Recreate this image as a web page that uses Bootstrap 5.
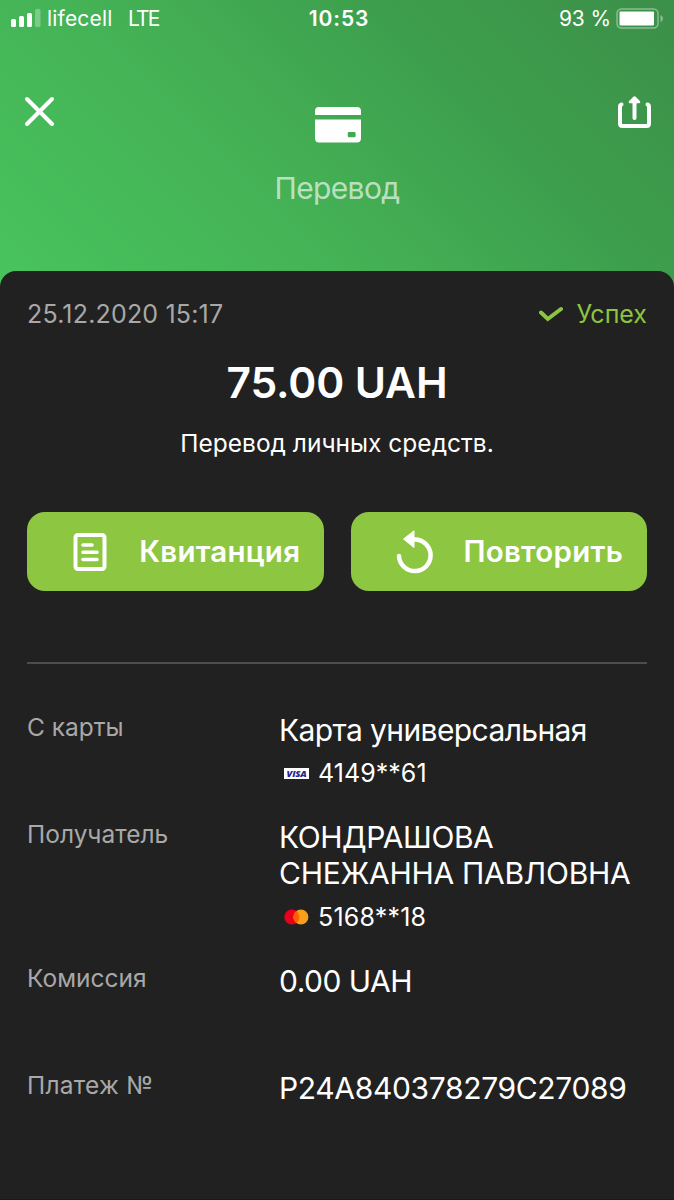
<!DOCTYPE html>
<html lang="ru">
<head>
<meta charset="utf-8">
<meta name="viewport" content="width=device-width, initial-scale=1">
<title>Перевод</title>
<link href="https://cdn.jsdelivr.net/npm/bootstrap@5.3.0/dist/css/bootstrap.min.css" rel="stylesheet">
<style>
body{font-family:Inter,"Liberation Sans",sans-serif;background:#212121;color:#fff;overflow-x:hidden}
.screen{height:1200px;overflow:hidden}
.hero{height:286px;background:linear-gradient(45deg,#48c45d 0%,#44b055 42%,#3d9f4d 68%,#3c8f49 100%)}
.statusbar{height:38px;padding:0 10px 0 11px;font-size:21px;line-height:38px;display:grid;grid-template-columns:1fr auto 1fr}
.carrier{margin-left:6px;letter-spacing:.2px}
.net{margin-left:15.5px;letter-spacing:-1.9px}
.clock{font-weight:600;letter-spacing:.9px;padding-left:3px}
.pct{letter-spacing:-.1px}
.battery{margin-left:5px}
.topbar{padding:58px 22px 0 24px}
.topicon{padding:11px 0 0 2px}
.hero-title{font-size:30px;line-height:40px;color:rgba(255,255,255,.65);margin-top:25px;letter-spacing:-.65px}
.sheet{height:929px;margin-top:-15px;border-radius:16px 16px 0 0;background:#212121;padding:22.500px 27px 0;border-bottom:1px solid #1b1919}
.meta{height:40px;font-size:25px;line-height:40px}
.date{letter-spacing:.18px}
.dim{color:#a8a8a8}
.ok{color:#8cc63f}
.tick{margin-right:14px}
.amount{font-size:42.5px;line-height:50px;font-weight:600;margin-top:24.500px;letter-spacing:-.1px}
.purpose{font-size:24.5px;line-height:36px;margin-top:17px}
.actions{margin-top:51px;gap:27px}
.act{height:79px;flex:1 1 0;border:0;border-radius:18px;background:#8dc742;color:#fff;font-size:29.5px;font-weight:600;padding:0 24px 0 46px;letter-spacing:.25px}
.act + .act{padding-left:44.500px}
.rule{height:2px;background:#4d4d4d;margin-top:71px}
.details{margin-top:45px}
.key{width:252px;flex:none;font-size:24.5px;line-height:36px}
.val{font-size:30px;line-height:36px;margin-top:3px}
.acct{font-size:25px;line-height:36px;margin-top:7px;padding-left:5px;gap:9px;letter-spacing:.05px}
.r1{height:107px}.r2{height:144px}.r3{height:107px}
.r2 .acct{margin-top:8px;letter-spacing:.2px}
.r2 .val{margin-top:3px}
.val-card{letter-spacing:-.6px}
.val-first{letter-spacing:-.42px}
.val-last{letter-spacing:-.27px}
.val-fee{letter-spacing:-.5px}
.val-id{letter-spacing:-.34px}
.key-id{letter-spacing:.25px}
svg{display:block;flex:none}
.visa{width:25px;height:11px;background:#fff;color:#24278a;font:italic 800 9.5px/11px "Open Sans",sans-serif;letter-spacing:-.25px;text-align:center}
</style>
</head>
<body>
<div class="screen">
  <header class="hero">
    <div class="statusbar">
      <div class="d-flex align-items-center">
        <svg width="30" height="20" viewBox="0 0 30 20" fill="#fff"><rect y="10" width="5" height="8" rx="1.5"/><rect x="8" y="7" width="5" height="11" rx="1.5"/><rect x="16" y="4" width="5" height="14" rx="1.5"/><rect x="24" width="5.500" height="18" rx="1.500" opacity=".3"/></svg>
        <span class="carrier">lifecell</span><span class="net">LTE</span>
      </div>
      <div class="clock">10:53</div>
      <div class="d-flex align-items-center justify-content-end">
        <span class="pct">93 %</span>
        <svg class="battery" width="48" height="22" viewBox="0 0 48 22"><rect x="1" y="1" width="41" height="19" rx="4.500" fill="none" stroke="#fff" stroke-width="1.500" opacity=".4"/><rect x="3.500" y="3.500" width="34.500" height="14" rx="1" fill="#fff"/><path d="M44.500 7q2.500 1 2.500 3.500t-2.500 3.500z" fill="#fff" opacity=".4"/></svg>
      </div>
    </div>
    <div class="topbar d-flex justify-content-between align-items-start">
      <svg width="32" height="32" viewBox="0 0 32 32"><path d="M3 3 28 28M28 3 3 28" stroke="#fff" stroke-width="4" stroke-linecap="round"/></svg>
      <div class="topicon"><svg width="46" height="36" viewBox="0 0 46 36" fill="#fff"><path d="M0 8V4Q0 0 4 0H42Q46 0 46 4V8ZM0 12.500H46V31Q46 35.500 42 35.500H4Q0 35.500 0 31ZM34 25q-1.300 0-1.300 1.300v2.600q0 1.300 1.300 1.300h5.300q1.300 0 1.300-1.300v-2.600q0-1.300-1.300-1.300z" fill-rule="evenodd"/></svg></div>
      <svg width="34" height="34" viewBox="0 0 34 34" fill="none" stroke="#fff" stroke-width="4" stroke-linecap="round" stroke-linejoin="round"><path d="M3.500 8.500Q2 9 2 11V27.500Q2 30 4.500 30H28.500Q31 30 31 27.500V11Q31 9 29.500 8.500"/><path d="M16.500 4V22"/><path d="M16.500 1.500 12 6H21Z" stroke-width="2.500" fill="#fff"/></svg>
    </div>
    <div class="hero-title text-center"><span>Перевод</span></div>
  </header>
  <main class="sheet position-relative">
    <div class="meta d-flex justify-content-between">
      <span class="dim date">25.12.2020 15:17</span>
      <span class="ok d-flex align-items-center"><svg class="tick" width="24" height="16" viewBox="0 0 24 16" fill="none" stroke="#8cc63f" stroke-width="4" stroke-linecap="round"><path d="M2 6.500 8.800 13 22 3"/></svg><span>Успех</span></span>
    </div>
    <div class="amount text-center"><span>75.00 UAH</span></div>
    <div class="purpose text-center"><span>Перевод личных средств.</span></div>
    <div class="actions d-flex">
      <button class="act btn d-flex align-items-center justify-content-between">
        <svg width="34" height="38" viewBox="0 0 34 38" fill="none" stroke="#fff" stroke-linecap="round"><rect x="2.500" y="2" width="29" height="34" rx="2.500" stroke-width="4"/><path d="M10 12H19M10 19.300H24M10 26.500H24" stroke-width="3.600"/></svg>
        <span>Квитанция</span>
      </button>
      <button class="act btn d-flex align-items-center justify-content-between">
        <svg width="38" height="44" viewBox="0 0 38 44" fill="none"><path d="M3 26A15.800 15.800 0 1 0 18.800 9.500" stroke="#fff" stroke-width="4.500" stroke-linecap="round"/><path d="M7.500 9 18 .8V17.500Z" fill="#fff" stroke="#fff" stroke-linejoin="round"/></svg>
        <span>Повторить</span>
      </button>
    </div>
    <div class="rule"></div>
    <div class="details">
      <div class="r1 d-flex"><div class="key dim">С карты</div><div class="val"><span class="val-card">Карта универсальная</span>
        <div class="acct d-flex align-items-center"><span class="visa">VISA</span><span>4149**61</span></div></div></div>
      <div class="r2 d-flex"><div class="key dim">Получатель</div><div class="val"><span class="val-first">КОНДРАШОВА</span><br><span class="val-last">СНЕЖАННА ПАВЛОВНА</span>
        <div class="acct d-flex align-items-center"><svg width="25" height="16" viewBox="0 0 25 16"><circle cx="7.800" cy="8" r="7.500" fill="#eb001b"/><circle cx="16.900" cy="8" r="7.500" fill="#f79e1b"/><path d="M12.350 2A7.500 7.500 0 0 1 12.350 14 7.500 7.500 0 0 1 12.350 2Z" fill="#ff5f00"/></svg><span>5168**18</span></div></div></div>
      <div class="r3 d-flex"><div class="key dim">Комиссия</div><div class="val"><span class="val-fee">0.00 UAH</span></div></div>
      <div class="r4 d-flex"><div class="key dim key-id">Платеж №</div><div class="val"><span class="val-id">P24A840378279C27089</span></div></div>
    </div>
  </main>
</div>
<script src="https://cdn.jsdelivr.net/npm/bootstrap@5.3.0/dist/js/bootstrap.bundle.min.js"></script>
</body>
</html>
